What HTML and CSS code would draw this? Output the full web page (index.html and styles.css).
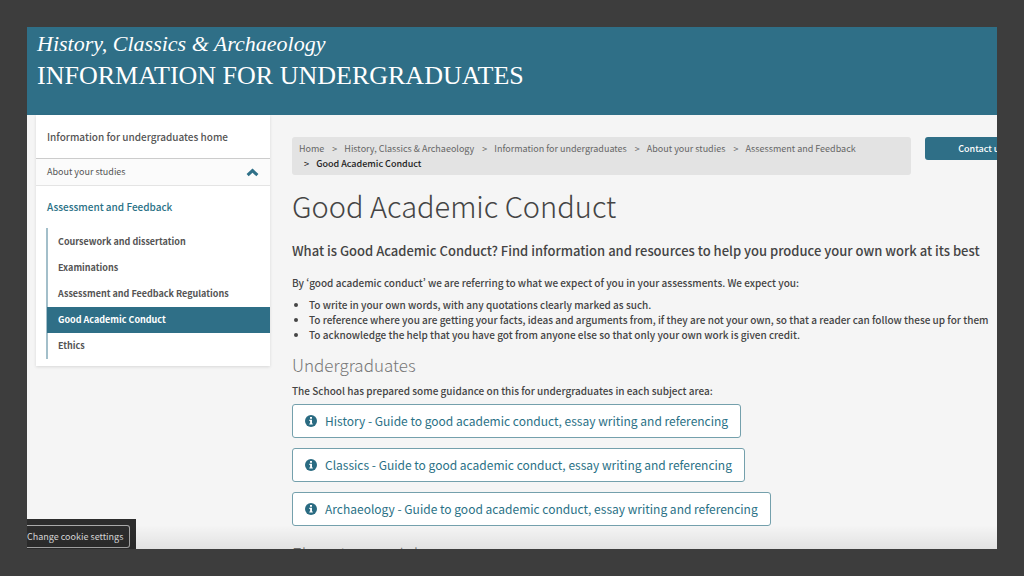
FILE: index.html
```html
<!DOCTYPE html>
<html lang="en">
<head>
    <meta charset="UTF-8">
    <meta name="viewport" content="width=device-width, initial-scale=1.0">
    <title>Good Academic Conduct</title>
    <link rel="stylesheet" href="styles.css">
</head>
<body>
    <div class="window">
        <header class="site-header">
            <p class="school">History, Classics &amp; Archaeology</p>
            <p class="site-name">Information for Undergraduates</p>
        </header>

        <div class="page">
            <nav class="sidebar" aria-label="Section">
                <a class="nav-home" href="#">Information for undergraduates home</a>
                <a class="nav-parent" href="#">About your studies
                    <svg class="chevron" viewBox="0 0 12 8" aria-hidden="true"><path d="M1.500 6.500 6 2.200l4.500 4.300" fill="none" stroke="currentColor" stroke-width="2.800"/></svg>
                </a>
                <a class="nav-section" href="#">Assessment and Feedback</a>
                <ul class="nav-list">
                    <li><a href="#">Coursework and dissertation</a></li>
                    <li><a href="#">Examinations</a></li>
                    <li><a href="#">Assessment and Feedback Regulations</a></li>
                    <li><a class="active" href="#" aria-current="page">Good Academic Conduct</a></li>
                    <li><a href="#">Ethics</a></li>
                </ul>
            </nav>

            <main class="content">
                <div class="top-row">
                    <ol class="breadcrumb">
                        <li><a href="#">Home</a></li>
                        <li><a href="#">History, Classics &amp; Archaeology</a></li>
                        <li><a href="#">Information for undergraduates</a></li>
                        <li><a href="#">About your studies</a></li>
                        <li><a href="#">Assessment and Feedback</a></li>
                        <li class="current">Good Academic Conduct</li>
                    </ol>
                    <a class="contact" href="#">Contact us</a>
                </div>

                <h1>Good Academic Conduct</h1>
                <p class="lead">What is Good Academic Conduct? Find information and resources to help you produce your own work at its best</p>
                <p>By ‘good academic conduct’ we are referring to what we expect of you in your assessments. We expect you:</p>
                <ul class="points">
                    <li>To write in your own words, with any quotations clearly marked as such.</li>
                    <li>To reference where you are getting your facts, ideas and arguments from, if they are not your own, so that a reader can follow these up for them</li>
                    <li>To acknowledge the help that you have got from anyone else so that only your own work is given credit.</li>
                </ul>

                <h2>Undergraduates</h2>
                <p>The School has prepared some guidance on this for undergraduates in each subject area:</p>
                <div class="guides">
                    <a class="guide" href="#"><svg class="info" viewBox="0 0 12 12" aria-hidden="true"><circle cx="6" cy="6" r="6"/><path d="M5 2h2v1.700H5zM4.300 4.700H7v3.700h.8v1.200H4.300V8.400h.8V5.900h-.8z"/></svg>History - Guide to good academic conduct, essay writing and referencing</a>
                    <a class="guide" href="#"><svg class="info" viewBox="0 0 12 12" aria-hidden="true"><circle cx="6" cy="6" r="6"/><path d="M5 2h2v1.700H5zM4.300 4.700H7v3.700h.8v1.200H4.300V8.400h.8V5.900h-.8z"/></svg>Classics - Guide to good academic conduct, essay writing and referencing</a>
                    <a class="guide" href="#"><svg class="info" viewBox="0 0 12 12" aria-hidden="true"><circle cx="6" cy="6" r="6"/><path d="M5 2h2v1.700H5zM4.300 4.700H7v3.700h.8v1.200H4.300V8.400h.8V5.900h-.8z"/></svg>Archaeology - Guide to good academic conduct, essay writing and referencing</a>
                </div>
                <h2>Elearning modules</h2>
            </main>
        </div>

        <div class="cookie-bar">
            <button type="button">Change cookie settings</button>
        </div>
    </div>
</body>
</html>
```
FILE: styles.css
```css
* {
    margin: 0;
    padding: 0;
    box-sizing: border-box;
}

body {
    height: 100vh;
    padding: 27px;
    background: #3d3d3d;
    color: #444;
    font-family: "Noto Sans CJK SC", "Noto Sans", sans-serif;
    font-feature-settings: "pwid";
    font-size: 10px;
    font-weight: 500;
    line-height: 15px;
    overflow: hidden;
}

a {
    color: inherit;
    text-decoration: none;
}

ul,
ol {
    list-style: none;
}

.window {
    position: relative;
    height: 100%;
    background: #f5f5f5;
    overflow: hidden;
}

/* Fade along the bottom edge */
.window::after {
    content: "";
    position: absolute;
    left: 0;
    right: 0;
    bottom: 0;
    height: 24px;
    background: linear-gradient(rgba(0, 0, 0, 0), rgba(0, 0, 0, 0.08));
    pointer-events: none;
}

/* Header */
.site-header {
    height: 88px;
    padding: 1px 10px;
    background: #2f6f87;
    color: #fff;
    font-family: "Liberation Serif", serif;
    font-weight: 400;
    line-height: 32px;
}

.school {
    font-size: 22px;
    font-style: italic;
}

.site-name {
    font-size: 26px;
    text-transform: uppercase;
}

/* Page runs on past the right edge of the window */
.page {
    display: grid;
    grid-template-columns: 234px minmax(0, 1fr);
    gap: 22px;
    align-items: start;
    margin-right: -40px;
    padding-left: 9px;
}

/* Sidebar */
.sidebar {
    padding-bottom: 7px;
    background: #fff;
    box-shadow: 0 1px 3px rgba(0, 0, 0, 0.12);
    color: #555;
    font-size: 9px;
    font-weight: 700;
}

.sidebar a {
    display: block;
    padding: 0 11px;
    line-height: 26px;
}

.sidebar .nav-home {
    border-bottom: 1px solid #ccc;
    font-size: 10px;
    font-weight: 500;
    line-height: 43px;
}

.sidebar .nav-parent {
    display: flex;
    justify-content: space-between;
    align-items: center;
    background: #fbfbfb;
    border-bottom: 1px solid #e4e4e4;
    font-weight: 400;
}

.chevron {
    width: 13px;
    height: 9px;
    color: #2f7088;
}

.sidebar .nav-section {
    color: #2a7186;
    font-size: 10px;
    font-weight: 500;
    line-height: 42px;
}

.nav-list {
    margin-left: 10px;
    padding-top: 1px;
    border-left: 2px solid #a3bfca;
}

.sidebar .nav-list a {
    padding: 0 10px;
}

.sidebar .nav-list .active {
    margin-left: -1px;
    padding-left: 11px;
    background: #2f6f87;
    color: #fff;
}

/* Content */
.content {
    padding-top: 22px;
    white-space: nowrap;
}

.top-row {
    display: flex;
    align-items: flex-start;
    gap: 14px;
    font-size: 9px;
}

.breadcrumb {
    flex: 1;
    display: flex;
    flex-wrap: wrap;
    padding: 4px 7px;
    background: #e3e3e3;
    border-radius: 3px;
    color: #666;
    font-weight: 400;
}

.breadcrumb li {
    padding-right: 3px;
}

.breadcrumb li + li::before {
    content: ">";
    padding: 0 7px 0 5px;
}

.breadcrumb .current {
    color: #222;
    font-weight: 500;
}

.contact {
    width: 112px;
    background: #2f6f87;
    border-radius: 3px;
    color: #fff;
    font-weight: 500;
    line-height: 23px;
    text-align: center;
}

h1 {
    margin-top: 7px;
    font-size: 29px;
    font-weight: 300;
    line-height: 46px;
}

.lead {
    margin: 12px 0 13px;
    font-size: 13px;
    line-height: 22px;
}

.points {
    margin: 7px 0 11px 17px;
    list-style: disc;
}

h2 {
    margin-bottom: 6px;
    color: #777;
    font-size: 17px;
    font-weight: 300;
    line-height: 24px;
}

.guides {
    display: flex;
    flex-direction: column;
    align-items: flex-start;
    gap: 10px;
    margin: 6px 0 16px;
}

.guide {
    display: flex;
    align-items: center;
    gap: 8px;
    padding: 0 12px;
    background: #fff;
    border: 1px solid #74a0ac;
    border-radius: 3px;
    color: #2a7186;
    font-size: 12px;
    font-weight: 400;
    line-height: 32px;
}

.info {
    width: 12px;
    height: 12px;
    fill: #2a6b82;
}

.info path {
    fill: #fff;
}

/* Cookie settings */
.cookie-bar {
    position: absolute;
    left: 0;
    bottom: 0;
    padding: 6px 6px 1px 0;
    background: #2d2d2d;
}

.cookie-bar button {
    padding: 0 6px 0 0;
    background: transparent;
    border: 1px solid #aaa;
    border-left: 0;
    border-radius: 0 3px 3px 0;
    color: #ddd;
    font-family: inherit;
    font-size: 9px;
    line-height: 21px;
}
```
